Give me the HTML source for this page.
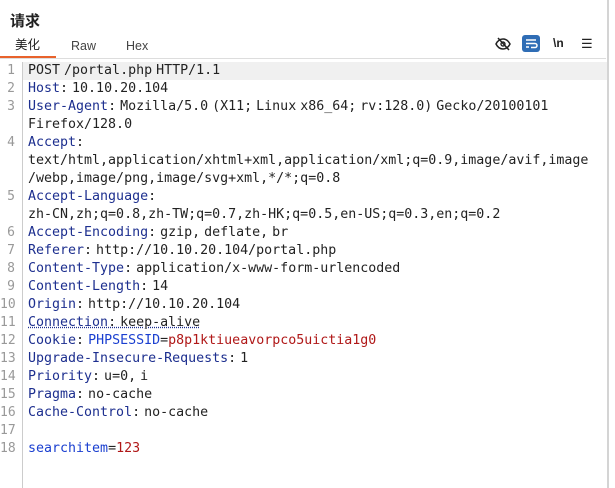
<!DOCTYPE html>
<html><head><meta charset="utf-8"><style>
body{margin:0;width:615px;height:488px;background:#fff;position:relative;overflow:hidden;font-family:"Liberation Sans","Noto Sans CJK SC",sans-serif}
.t{position:absolute;left:10px;top:10px;font-size:15px;font-weight:bold;color:#222}
.tab{position:absolute;top:38px;font-size:12.5px;line-height:16px;color:#444}
.ul{position:absolute;left:0;top:56px;width:56px;height:2px;background:#e8622c}
.sep{position:absolute;left:0;top:58px;width:606px;height:1px;background:#ddd}
.vr{position:absolute;left:607px;top:0;width:2px;height:488px;background:#d4d4d4}
.gut{position:absolute;left:22px;top:62px;width:1px;height:426px;background:#ccc}
.hl{position:absolute;left:23px;top:62px;width:584px;height:18px;background:#f0f0f0}
.r{position:absolute;left:28px;font-family:"DejaVu Sans Mono",monospace;font-size:13.3px;line-height:18px;white-space:pre;color:#222;word-spacing:-4px;letter-spacing:0px}
.n{position:absolute;left:0;width:15px;text-align:right;font-family:"DejaVu Sans Mono",monospace;font-size:13px;line-height:18px;color:#999}
.k{color:#1d2f8f}.b{color:#1a3fd0}.v{color:#b01818}
</style></head><body>
<div class="t">请求</div>
<div class="tab" style="left:15px;top:37px;color:#222">美化</div>
<div class="tab" style="left:71px">Raw</div>
<div class="tab" style="left:126px">Hex</div>
<div class="ul"></div><div class="sep"></div><div class="vr"></div>
<svg style="position:absolute;left:495px;top:37px" width="16" height="14" viewBox="0 0 16 14"><path d="M1 7C3 3 6 2 8 2s5 1 7 5c-2 4-5 5-7 5S3 11 1 7z" fill="none" stroke="#222" stroke-width="1.5"/><circle cx="8" cy="7" r="2" fill="none" stroke="#222" stroke-width="1.4"/><path d="M3 1l11 12" stroke="#222" stroke-width="1.5"/></svg>
<div style="position:absolute;left:522px;top:35px;width:18px;height:17px;background:#2f6db5;border-radius:3px"></div>
<svg style="position:absolute;left:524px;top:37px" width="14" height="13" viewBox="0 0 14 13"><path d="M2 3h10M2 6.5h9a2 2 0 010 4H7M2 10h3" fill="none" stroke="#fff" stroke-width="1.5"/></svg>
<div style="position:absolute;left:553px;top:36px;font-size:12px;color:#222;font-weight:bold">\n</div>
<div style="position:absolute;left:581px;top:36px;font-size:13px;color:#222">☰</div>
<div class="hl"></div><div class="gut"></div>
<div class="n" style="top:62px">1</div><div class="n" style="top:80px">2</div><div class="n" style="top:98px">3</div><div class="n" style="top:134px">4</div><div class="n" style="top:188px">5</div><div class="n" style="top:224px">6</div><div class="n" style="top:242px">7</div><div class="n" style="top:260px">8</div><div class="n" style="top:278px">9</div><div class="n" style="top:296px">10</div><div class="n" style="top:314px">11</div><div class="n" style="top:332px">12</div><div class="n" style="top:350px">13</div><div class="n" style="top:368px">14</div><div class="n" style="top:386px">15</div><div class="n" style="top:404px">16</div><div class="n" style="top:422px">17</div><div class="n" style="top:440px">18</div>
<div class="r" style="top:62px">POST /portal.php HTTP/1.1</div>
<div class="r" style="top:80px"><span class="k">Host</span>: 10.10.20.104</div>
<div class="r" style="top:98px"><span class="k">User-Agent</span>: Mozilla/5.0 (X11; Linux x86_64; rv:128.0) Gecko/20100101</div>
<div class="r" style="top:116px">Firefox/128.0</div>
<div class="r" style="top:134px"><span class="k">Accept</span>:</div>
<div class="r" style="top:152px">text/html,application/xhtml+xml,application/xml;q=0.9,image/avif,image</div>
<div class="r" style="top:170px">/webp,image/png,image/svg+xml,*/*;q=0.8</div>
<div class="r" style="top:188px"><span class="k">Accept-Language</span>:</div>
<div class="r" style="top:206px">zh-CN,zh;q=0.8,zh-TW;q=0.7,zh-HK;q=0.5,en-US;q=0.3,en;q=0.2</div>
<div class="r" style="top:224px"><span class="k">Accept-Encoding</span>: gzip, deflate, br</div>
<div class="r" style="top:242px"><span class="k">Referer</span>: http://10.10.20.104/portal.php</div>
<div class="r" style="top:260px"><span class="k">Content-Type</span>: application/x-www-form-urlencoded</div>
<div class="r" style="top:278px"><span class="k">Content-Length</span>: 14</div>
<div class="r" style="top:296px"><span class="k">Origin</span>: http://10.10.20.104</div>
<div class="r" style="top:314px;text-decoration:underline dotted #1d2f8f"><span class="k">Connection</span>: keep-alive</div>
<div class="r" style="top:332px"><span class="k">Cookie</span>: <span class="b">PHPSESSID</span>=<span class="v">p8p1ktiueavorpco5uictia1g0</span></div>
<div class="r" style="top:350px"><span class="k">Upgrade-Insecure-Requests</span>: 1</div>
<div class="r" style="top:368px"><span class="k">Priority</span>: u=0, i</div>
<div class="r" style="top:386px"><span class="k">Pragma</span>: no-cache</div>
<div class="r" style="top:404px"><span class="k">Cache-Control</span>: no-cache</div>
<div class="r" style="top:440px"><span class="b">searchitem</span>=<span class="v">123</span></div>
</body></html>
